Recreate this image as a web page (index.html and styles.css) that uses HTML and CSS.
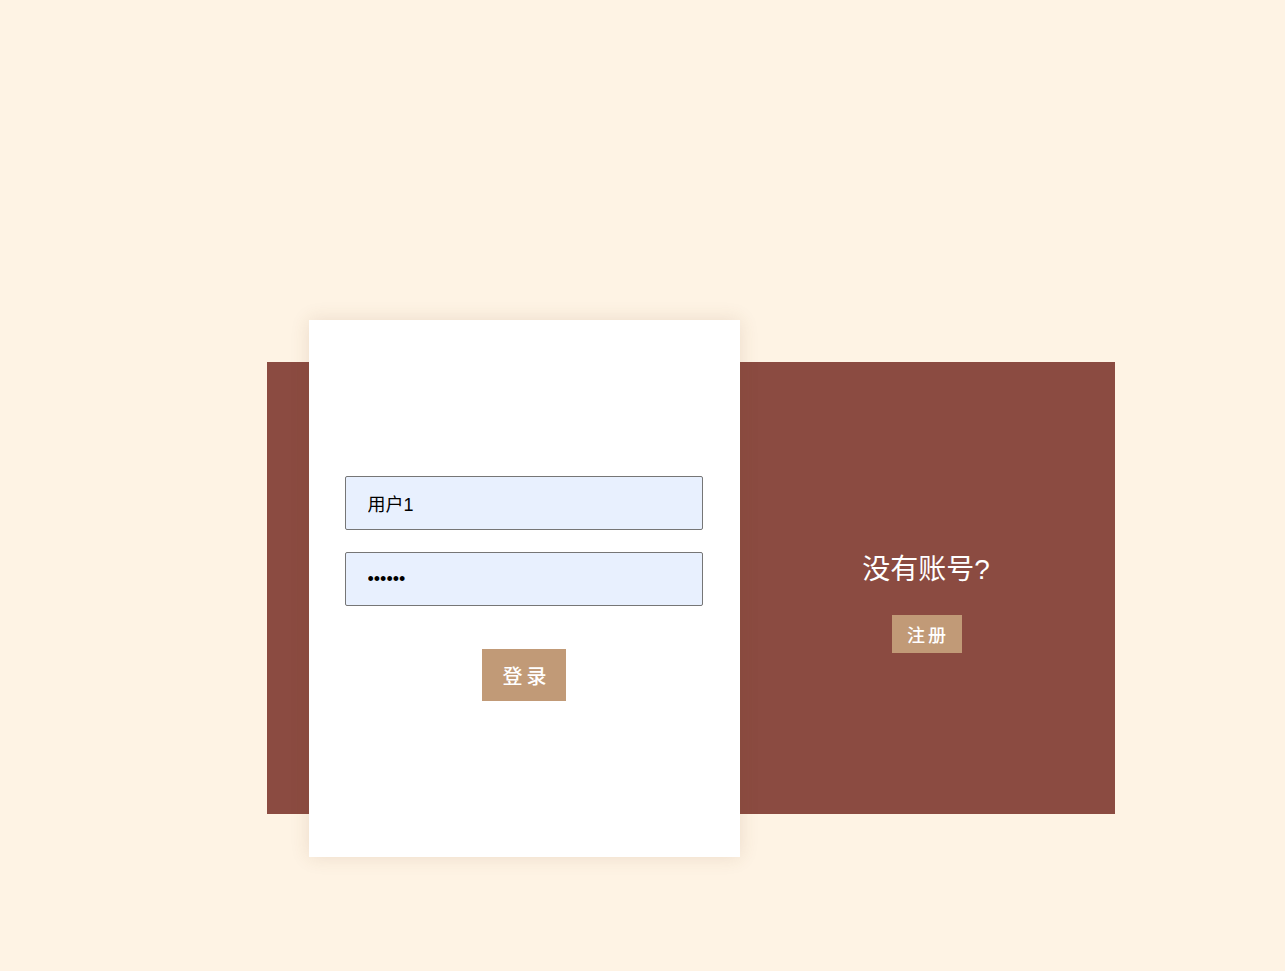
FILE: index.html
```html
<!DOCTYPE html>
<html lang="zh">
<head>
<meta charset="utf-8">
<title>登录</title>
<link rel="stylesheet" href="styles.css">
</head>
<body>
<div class="page">
  <div class="board">
    <div class="board-left"></div>
    <div class="board-right">
      <h2 class="ask">没有账号?</h2>
      <button class="btn btn-reg" type="button">注册</button>
    </div>
    <form class="card">
      <input class="field" type="text" value="用户1">
      <input class="field" type="password" value="123456">
      <button class="btn btn-login" type="button">登录</button>
    </form>
  </div>
</div>
</body>
</html>
```
FILE: styles.css
```css
* { box-sizing: border-box; }
html, body {
  margin: 0;
  padding: 0;
  background: #fef3e4;
  font-family: "Liberation Sans", "Noto Sans CJK SC", sans-serif;
}
.page {
  width: 1285px;
  height: 971px;
  padding-top: 362px;
  padding-left: 267px;
}
.board {
  position: relative;
  width: 848px;
  height: 452px;
  background: #8b4b41;
  display: flex;
}
.board-left {
  width: 473px;
  flex: none;
}
.board-right {
  flex: 1;
  display: flex;
  flex-direction: column;
  align-items: center;
  padding-top: 190px;
}
.ask {
  margin: 0 3px 0 0;
  font-size: 28px;
  line-height: 36px;
  font-weight: normal;
  color: #ffffff;
}
.btn {
  border: none;
  border-radius: 0;
  background: #c19a77;
  color: #ffffff;
  font-family: "Liberation Sans", "Noto Sans CJK SC", sans-serif;
  cursor: pointer;
}
.btn-reg {
  margin-top: 27px;
  margin-right: 2px;
  height: 38px;
  width: 70px;
  padding: 0 8px 0 11px;
  font-size: 18px;
  font-weight: 500;
  letter-spacing: 3px;
}
.card {
  position: absolute;
  left: 42px;
  top: -42px;
  width: 431px;
  height: 537px;
  padding-right: 2px;
  background: #ffffff;
  box-shadow: 0 0 18px rgba(120, 80, 40, 0.14);
  display: flex;
  flex-direction: column;
  align-items: center;
  justify-content: center;
  gap: 22px;
}
.field {
  width: 358px;
  height: 54px;
  margin: 0;
  border: 1px solid #767676;
  border-radius: 2px;
  background: #e8f0fe;
  padding: 0 22px;
  font-family: "Liberation Sans", "Noto Sans CJK SC", sans-serif;
  font-size: 18px;
  color: #000000;
  outline: none;
}
.btn-login {
  margin-top: 21px;
  width: 84px;
  height: 52px;
  padding: 0 14px 0 20px;
  font-size: 20px;
  font-weight: 500;
  letter-spacing: 4px;
}
```
